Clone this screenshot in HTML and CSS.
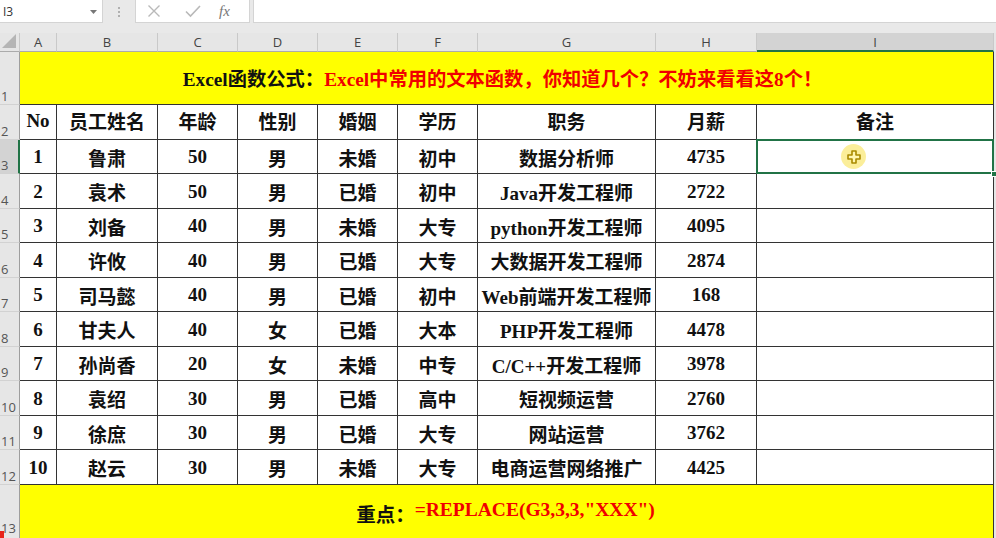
FILE: index.html
```html
<!DOCTYPE html>
<html lang="zh">
<head>
<meta charset="utf-8">
<link rel="stylesheet" href="styles.css">
</head>
<body>
<div class="app">
  <div class="fbar">
    <div class="namebox"><span class="ref">I3</span><svg class="caret" width="7" height="4" viewBox="0 0 7 4"><path d="M0 0H7L3.5 4Z" fill="#777"/></svg></div>
    <div class="dots"><i></i><i></i><i></i></div>
    <div class="fxbox">
      <svg class="ico" width="14" height="14" viewBox="0 0 14 14"><path d="M1.5 1.5L12.5 12.5M12.5 1.5L1.5 12.5" stroke="#b9b9b9" stroke-width="1.4" fill="none"/></svg>
      <svg class="ico" width="16" height="14" viewBox="0 0 16 14"><path d="M1 7.5L5.5 12L15 2" stroke="#b9b9b9" stroke-width="1.6" fill="none"/></svg>
      <span class="fx">fx</span>
    </div>
    <div class="finput"></div>
  </div>

  <div class="sheet">
    <div class="corner"><svg width="14" height="14" viewBox="0 0 14 14"><path d="M14 0V14H0Z" fill="#b5b5b5"/></svg></div>
    <div class="ch">A</div><div class="ch">B</div><div class="ch">C</div><div class="ch">D</div><div class="ch">E</div><div class="ch">F</div><div class="ch">G</div><div class="ch">H</div><div class="ch ch-sel">I</div>

    <div class="rh">1</div>
    <div class="title"><span class="blk">Excel函数公式：</span><span class="red">Excel中常用的文本函数，你知道几个？不妨来看看这8个！</span></div>

    <div class="rh">2</div>
    <div class="c hd">No</div><div class="c hd">员工姓名</div><div class="c hd">年龄</div><div class="c hd">性别</div><div class="c hd">婚姻</div><div class="c hd">学历</div><div class="c hd">职务</div><div class="c hd">月薪</div><div class="c hd">备注</div>

    <div class="rh rh-sel">3</div>
    <div class="c">1</div><div class="c">鲁肃</div><div class="c">50</div><div class="c">男</div><div class="c">未婚</div><div class="c">初中</div><div class="c">数据分析师</div><div class="c">4735</div>
    <div class="c sel"><span class="cursor"><svg width="14" height="14" viewBox="0 0 14 14"><path d="M5 1H9V5H13V9H9V13H5V9H1V5H5Z" fill="#fff6b0" stroke="#a98a00" stroke-width="1.6" stroke-linejoin="round"/></svg></span><span class="handle"></span></div>

    <div class="rh">4</div>
    <div class="c">2</div><div class="c">袁术</div><div class="c">50</div><div class="c">男</div><div class="c">已婚</div><div class="c">初中</div><div class="c">Java开发工程师</div><div class="c">2722</div><div class="c"></div>

    <div class="rh">5</div>
    <div class="c">3</div><div class="c">刘备</div><div class="c">40</div><div class="c">男</div><div class="c">未婚</div><div class="c">大专</div><div class="c">python开发工程师</div><div class="c">4095</div><div class="c"></div>

    <div class="rh">6</div>
    <div class="c">4</div><div class="c">许攸</div><div class="c">40</div><div class="c">男</div><div class="c">已婚</div><div class="c">大专</div><div class="c">大数据开发工程师</div><div class="c">2874</div><div class="c"></div>

    <div class="rh">7</div>
    <div class="c">5</div><div class="c">司马懿</div><div class="c">40</div><div class="c">男</div><div class="c">已婚</div><div class="c">初中</div><div class="c">Web前端开发工程师</div><div class="c">168</div><div class="c"></div>

    <div class="rh">8</div>
    <div class="c">6</div><div class="c">甘夫人</div><div class="c">40</div><div class="c">女</div><div class="c">已婚</div><div class="c">大本</div><div class="c">PHP开发工程师</div><div class="c">4478</div><div class="c"></div>

    <div class="rh">9</div>
    <div class="c">7</div><div class="c">孙尚香</div><div class="c">20</div><div class="c">女</div><div class="c">未婚</div><div class="c">中专</div><div class="c">C/C++开发工程师</div><div class="c">3978</div><div class="c"></div>

    <div class="rh">10</div>
    <div class="c">8</div><div class="c">袁绍</div><div class="c">30</div><div class="c">男</div><div class="c">已婚</div><div class="c">高中</div><div class="c">短视频运营</div><div class="c">2760</div><div class="c"></div>

    <div class="rh">11</div>
    <div class="c">9</div><div class="c">徐庶</div><div class="c">30</div><div class="c">男</div><div class="c">已婚</div><div class="c">大专</div><div class="c">网站运营</div><div class="c">3762</div><div class="c"></div>

    <div class="rh">12</div>
    <div class="c">10</div><div class="c">赵云</div><div class="c">30</div><div class="c">男</div><div class="c">未婚</div><div class="c">大专</div><div class="c">电商运营网络推广</div><div class="c">4425</div><div class="c"></div>

    <div class="rh rh-last">13</div>
    <div class="foot"><span class="blk">重点：</span><span class="red">=REPLACE(G3,3,3,"XXX")</span></div>
  </div>
  <span class="rec"></span>
</div>
</body>
</html>
```

FILE: styles.css
```css
* { box-sizing: border-box; }
html, body { margin: 0; padding: 0; }
body {
  width: 996px;
  height: 538px;
  overflow: hidden;
  background: #e6e6e6;
  font-family: "Liberation Serif", "Noto Sans CJK SC", serif;
}
.app {
  position: relative;
  width: 996px;
  height: 538px;
  overflow: hidden;
}

/* formula bar */
.fbar {
  display: flex;
  height: 33px;
  padding-bottom: 10px;
  background: #e9e9e9;
}
.namebox {
  width: 103px;
  background: #fff;
  border-right: 1px solid #d4d4d4;
  border-bottom: 1px solid #d4d4d4;
  display: flex;
  align-items: center;
  justify-content: space-between;
  padding: 0 5px 0 3px;
  font-family: "Open Sans", "Noto Sans", sans-serif;
  font-size: 12px;
  color: #333;
}
.caret { margin-top: 1px; }
.dots {
  width: 32px;
  display: flex;
  flex-direction: column;
  align-items: center;
  justify-content: center;
  gap: 2px;
}
.dots i {
  display: block;
  width: 2px;
  height: 2px;
  background: #b0b0b0;
}
.fxbox {
  width: 115px;
  background: #fff;
  border: 1px solid #d4d4d4;
  border-top: 0;
  display: flex;
  align-items: center;
  padding-left: 11px;
  gap: 24px;
}
.fx {
  font-family: "Liberation Serif", serif;
  font-style: italic;
  font-size: 15px;
  color: #777;
  margin-left: -6px;
}
.finput {
  flex: 1;
  margin-left: 3px;
  background: #fff;
  border-left: 1px solid #d4d4d4;
  border-bottom: 1px solid #d4d4d4;
}

/* sheet grid */
.sheet {
  display: grid;
  grid-template-columns: 20px 37px 101px 80px 80px 80px 80px 178px 101px 237px;
  grid-template-rows: 19px 53px 35px 34px 35px 34px 35px 34px 35px 34px 35px 34px 35px 53px;
  width: 994px;
}
.corner {
  background: #e6e6e6;
  border-right: 1px solid #c9c9c9;
  border-bottom: 1px solid #ababab;
  display: flex;
  align-items: flex-end;
  justify-content: flex-end;
  padding: 0 3px 3px 0;
}
.ch {
  background: #e6e6e6;
  border-right: 1px solid #c9c9c9;
  border-bottom: 1px solid #ababab;
  font-family: "Open Sans", "Noto Sans", sans-serif;
  font-size: 13px;
  color: #444;
  display: flex;
  align-items: center;
  justify-content: center;
}
.ch-sel {
  background: #d3d3d3;
  border-bottom: 2px solid #217346;
}
.rh {
  background: #e6e6e6;
  border-right: 1px solid #9e9e9e;
  border-bottom: 1px solid #d2d2d2;
  font-family: "Open Sans", "Noto Sans", sans-serif;
  font-size: 13px;
  line-height: 15px;
  color: #555;
  display: flex;
  align-items: flex-end;
  padding: 0 0 0 1px;
  white-space: nowrap;
  overflow: visible;
}
.rh-last { padding-bottom: 2px; border-bottom: 0; }
.rh-sel {
  background: #d3d3d3;
  border-right: 2px solid #217346;
}
.title, .foot {
  grid-column: 2 / 11;
  background: #ffff00;
  border-right: 1px solid #333;
  border-bottom: 1px solid #333;
  display: flex;
  align-items: center;
  justify-content: center;
  font-weight: 700;
  font-size: 19.3px;
  white-space: nowrap;
}
.title { padding-right: 8px; }
.foot { align-items: flex-start; padding-top: 14px; font-size: 19.5px; padding-right: 2px; border-bottom: 0; }
.blk { color: #111; }
.red { color: #f00000; }

.c {
  background: #fff;
  border-right: 1px solid #333;
  border-bottom: 1px solid #333;
  display: flex;
  align-items: center;
  justify-content: center;
  font-weight: 700;
  font-size: 19px;
  color: #111;
  white-space: nowrap;
  padding-top: 1px;
}
.hd { padding-top: 0; padding-bottom: 3px; }
.sel {
  position: relative;
  overflow: visible;
}
.sel::after {
  content: "";
  position: absolute;
  left: -1px;
  top: -1px;
  right: -1px;
  bottom: -1px;
  border: 2px solid #217346;
}
.handle {
  position: absolute;
  right: -4px;
  bottom: -4px;
  width: 6px;
  height: 6px;
  background: #217346;
  border: 1px solid #fff;
  z-index: 2;
}
.cursor {
  position: absolute;
  left: 84px;
  top: 4px;
  width: 25px;
  height: 25px;
  border-radius: 50%;
  background: rgba(250, 232, 120, 0.75);
  display: flex;
  align-items: center;
  justify-content: center;
}
.rec {
  position: absolute;
  left: 0;
  bottom: 0;
  width: 4px;
  height: 7px;
  background: #e8231a;
}
```
